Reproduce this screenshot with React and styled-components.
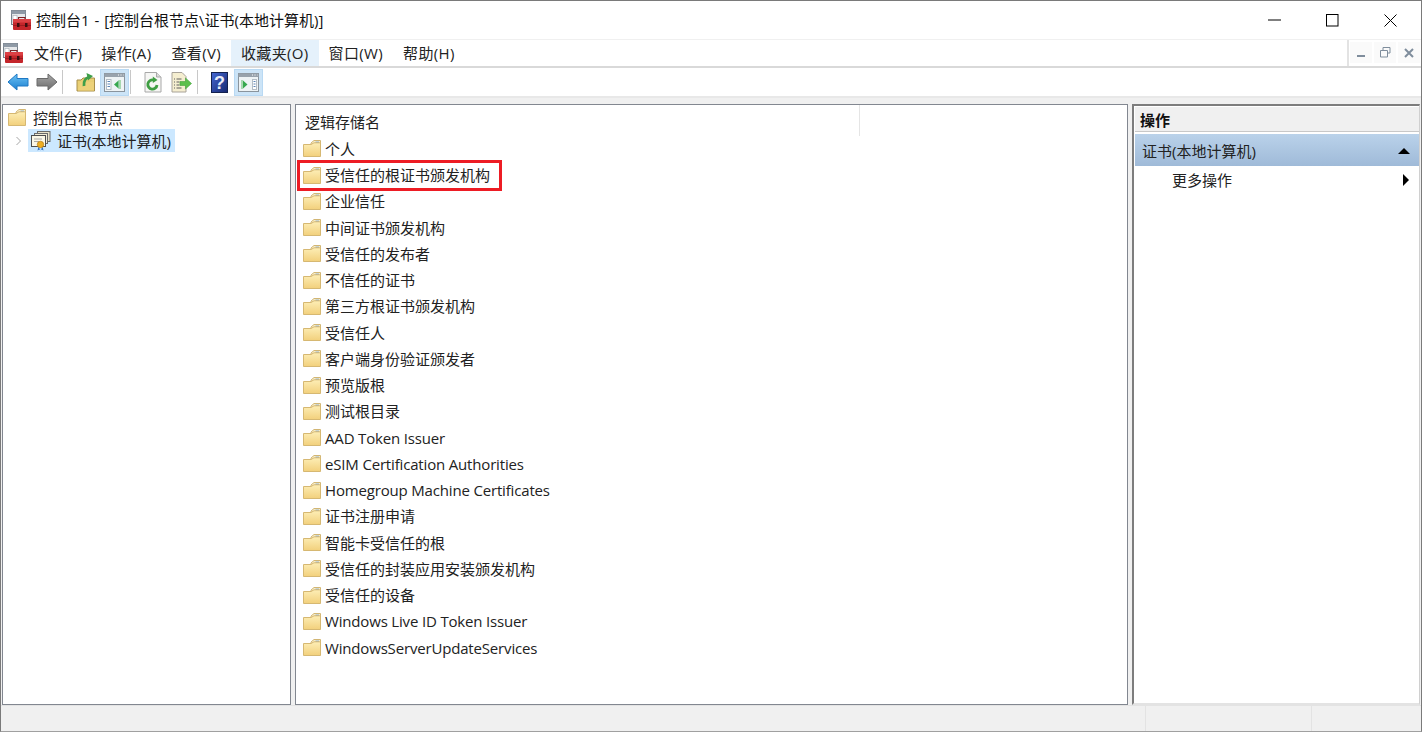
import React from 'react';
import styled, { createGlobalStyle } from 'styled-components';

const Global = createGlobalStyle`
  html, body { margin: 0; padding: 0; background: #fff; overflow: hidden; }
  * { box-sizing: border-box; }
`;
const FONT = `"Open Sans", "Noto Sans CJK SC", sans-serif`;

const Win = styled.div`
  width: 1422px; height: 732px; display: flex; flex-direction: column;
  border: 1px solid #7a7a7a; border-bottom-color: #a0a0a0; background: #f0f0f0;
  font: 15px/20px ${FONT}; color: #222; overflow: hidden;
`;
const TitleBar = styled.div`
  height: 38px; flex: none; background: #fff; display: flex; align-items: center; padding-left: 10px;
`;
const TitleText = styled.div`
  margin-left: 5px; font-size: 15px; color: #111; flex: 1; white-space: nowrap; word-spacing: 1px;
`;
const Caption = styled.div`display: flex; align-items: center; margin-right: 2px;`;
const CapBtn = styled.div`
  width: 58px; height: 38px; display: flex; align-items: center; justify-content: center;
`;
const MenuBar = styled.div`
  height: 29px; flex: none; display: flex; background: #fff; border-top: 1px solid #f0f0f0; border-bottom: 2px solid #d9d9d9;
`;
const MenuIcon = styled.div`width: 23px; flex: none; padding: 3px 0 0 2px;`;
const MenuItem = styled.div`
  padding: 0 ${p => p.$tight ? '9px' : '10px'} 0 10px; height: 26px; line-height: 26px; white-space: nowrap; color: #222; letter-spacing: 0.35px;
  background: ${p => p.$hot ? '#e5f1fb' : 'transparent'};
`;
const MenuSpacer = styled.div`flex: 1; border-right: 2px solid #e3e3e3;`;
const MdiBtns = styled.div`display: flex; gap: 2px; padding: 2px 0 0 1px; width: 72px;`;
const MdiBtn = styled.div`
  width: 22px; height: 21px; background: #fafafa; display: flex; align-items: center; justify-content: center;
`;
const ToolBar = styled.div`
  height: 30px; flex: none; display: flex; align-items: center; background: #fff; padding-left: 2px; border-bottom: 2px solid #e8e8e8;
`;
const Tool = styled.div`
  width: 29px; height: 27px; flex: none; display: flex; align-items: center; justify-content: center;
  background: ${p => p.$on ? '#cce4f7' : 'transparent'}; border: 1px solid ${p => p.$on ? '#b9d9f3' : 'transparent'};
`;
const Sep = styled.div`width: 1px; height: 24px; background: #c8c8c8; margin: 0 ${p => p.$r || 7}px 0 1px; flex: none;`;
const Gap = styled.div`height: 6px; flex: none; background: #f0f0f0;`;
const Panes = styled.div`height: 601px; flex: none; display: flex; background: #f0f0f0; padding-left: 1px;`;
const TreePane = styled.div`
  width: 289px; flex: none; background: #fff; border: 1px solid #828790; padding: 1px 0 0 5px;
`;
const TreeRow = styled.div`
  display: flex; align-items: center; height: 23px; white-space: nowrap;
`;
const Chevron = styled.div`width: 20px; flex: none; display: flex; justify-content: center;`;
const TreeSel = styled.div`
  display: flex; align-items: center; height: 23px; background: #cce8ff; padding: 0 4px 0 3px; gap: 6px;
`;
const TreeLabel = styled.span`margin-left: 7px;`;
const ListPane = styled.div`
  width: 833px; margin-left: 4px; flex: none; background: #fff; border: 1px solid #828790; position: relative;
`;
const ListHead = styled.div`
  height: 31px; padding: 6px 0 0 9px; line-height: 22px; width: 564px; border-right: 1px solid #e5e5e5;
`;
const List = styled.div`padding-left: 7px; margin-top: -0.2px;`;
const Row = styled.div`
  height: 26.25px; display: flex; align-items: center; gap: 4px; white-space: nowrap; color: #222;
  letter-spacing: ${p => p.$latin ? '-0.17px' : '0'};
`;
const RedBox = styled.div`
  position: absolute; left: 1px; top: 55px; width: 205px; height: 31px; border: 3px solid #ed1c24;
`;
const ActionPane = styled.div`
  width: 288px; margin-left: 4px; flex: none; background: #fff;
  border-left: 2px solid #7d7d7d; border-top: 2px solid #7d7d7d; border-right: 1px solid #d0d0d0; border-bottom: 2px solid #e3e3e3;
  display: flex; flex-direction: column;
`;
const ActionHead = styled.div`
  height: 26px; background: #f0f0f0; border-top: 1px solid #fff; font-weight: 700; padding: 1px 0 0 5px; line-height: 25px; color: #111;
  border-bottom: 1px solid #c8c8c8; margin-left: 1px;
`;
const ActionSection = styled.div`
  height: 32px; margin: 2px 0 0 1px; background: linear-gradient(#bad2ea, #9fbad8); display: flex; align-items: center;
  justify-content: space-between; padding: 1px 9px 0 7px; color: #222;
`;
const ActionItem = styled.div`
  height: 30px; display: flex; align-items: center; justify-content: space-between; padding: 0 10px 2px 38px;
`;
const Tri = styled.div`
  width: 0; height: 0; flex: none;
  ${p => p.$up
    ? 'border-left: 6px solid transparent; border-right: 6px solid transparent; border-bottom: 6px solid #000;'
    : 'border-top: 6px solid transparent; border-bottom: 6px solid transparent; border-left: 6px solid #000;'}
`;
const StatusBar = styled.div`
  flex: 1; display: flex; background: #f0f0f0; border-top: 1px solid #e3e3e3; justify-content: flex-end;
`;
const StatusCell = styled.div`
  width: ${p => p.$w}px; border-left: 1px solid #e3e3e3;
`;

const Folder = () => (
  <svg width="18" height="17" viewBox="0 0 18 17">
    <defs>
      <linearGradient id="fg" x1="0" y1="0" x2="0" y2="1">
        <stop offset="0" stopColor="#fdeeb6" />
        <stop offset="1" stopColor="#f2d07c" />
      </linearGradient>
    </defs>
    <path d="M8 3 L11 .5 L17.5 .5 L17.5 6 L8 6 Z" fill="#f9eec8" stroke="#d2b674" />
    <rect x="12.5" y="1.6" width="3.5" height="1.4" fill="#7fa9d4" />
    <path d="M.5 4.5 L8 4.5 L11 2.8 L17.5 2.8 L17.5 16.5 L.5 16.5 Z" fill="url(#fg)" stroke="#d6b872" strokeLinejoin="round" />
  </svg>
);

const ConsoleIcon = () => (
  <svg width="20" height="20" viewBox="0 0 20 20">
    <rect x=".5" y=".5" width="14" height="14" fill="#e6e8ea" stroke="#78828c" />
    <rect x=".5" y=".5" width="14" height="3.5" fill="#8f9aa6" />
    <rect x="2" y="5.5" width="4" height="7" fill="#fff" stroke="#a4adb6" strokeWidth=".6" />
    <path d="M7.5 9.5 V7.5 H14 V9.5" fill="none" stroke="#7c2326" strokeWidth="1.2" />
    <rect x="2" y="9" width="18" height="11" rx="1" fill="#c4262b" />
    <rect x="2" y="9" width="18" height="3.5" rx="1" fill="#dc4044" />
    <rect x="2" y="15" width="18" height="1" fill="#9d1b20" />
    <rect x="6" y="13" width="2.5" height="4" fill="#3a0f10" />
    <rect x="14" y="13" width="2.5" height="4" fill="#3a0f10" />
  </svg>
);

const Cert = () => (
  <svg width="20" height="20" viewBox="0 0 20 20">
    <rect x="6.5" y=".5" width="12.5" height="10" fill="#e8e2c8" stroke="#6a6a6a" />
    <rect x="3.5" y="2.5" width="13" height="10" fill="#f2ecd6" stroke="#6a6a6a" />
    <rect x=".5" y="4.5" width="14" height="11" fill="#fbf7e6" stroke="#4f4f4f" />
    <path d="M3 8h8M3 10.5h5" stroke="#a8a8a8" />
    <path d="M7.5 15.5l-1 4 2-1 1 1M11.5 15.5l1 4-2-1-1 1" fill="#2f6fc0" />
    <circle cx="9.5" cy="13.5" r="3.2" fill="#eeae22" stroke="#b07a14" strokeWidth=".7" />
  </svg>
);

const Arrow = ({ color, stroke, dark, flip }) => (
  <svg width="22" height="20" viewBox="0 0 22 20" style={flip ? { transform: 'scaleX(-1)' } : undefined}>
    <defs>
      <linearGradient id={`a${color.slice(1)}`} x1="0" y1="0" x2="0" y2="1">
        <stop offset="0" stopColor={color} />
        <stop offset="1" stopColor={dark} />
      </linearGradient>
    </defs>
    <path d="M1 10 L10 2 L10 6.5 L21 6.5 L21 14 L10 14 L10 18 Z" fill={`url(#a${color.slice(1)})`} stroke={stroke} strokeLinejoin="round" />
  </svg>
);

const PaneToggle = ({ right }) => (
  <svg width="21" height="21" viewBox="0 0 21 21">
    <rect x=".5" y="1.5" width="20" height="18" fill="#eef3f5" stroke="#8a949d" />
    <rect x=".5" y="1.5" width="20" height="3.5" fill="#98a2ac" />
    <path d="M14 3h1M16.5 3h1M19 3h.5" stroke="#fff" />
    {right ? (
      <>
        <rect x="14.5" y="7.5" width="4" height="10" fill="#fff" stroke="#b4bdc5" />
        <path d="M15.5 9.5h2M15.5 12h2M15.5 14.5h2" stroke="#5d86b6" />
        <rect x="3" y="8" width="2" height="9" fill="#a6d8b0" />
        <path d="M5 8.5 L9.5 12.5 L5 16.5 Z" fill="#36a84e" />
      </>
    ) : (
      <>
        <rect x="2.5" y="7.5" width="4.5" height="10" fill="#fff" stroke="#b4bdc5" />
        <path d="M3.5 9.5h2.5M3.5 12h2.5M3.5 14.5h2.5" stroke="#5d86b6" />
        <rect x="14.5" y="8" width="2.5" height="9" fill="#a6d8b0" />
        <path d="M14.5 8.5 L10 12.5 L14.5 16.5 Z" fill="#36a84e" />
      </>
    )}
  </svg>
);

const UpFolder = () => (
  <svg width="20" height="20" viewBox="0 0 20 20">
    <path d="M1 8 L5 8 L7 6 L18.5 6 L18.5 19 L1 19 Z" fill="#e9cf74" stroke="#a88f4a" />
    <path d="M2 18.5 L4 10 L18 10 L18 18.5 Z" fill="#edd27a" />
    <path d="M8 14 C7.5 9 9.5 6 13 5" fill="none" stroke="#3f9f49" strokeWidth="2.8" />
    <path d="M10.5 1 L17 4 L12 8.5 Z" fill="#3f9f49" />
  </svg>
);

const Refresh = () => (
  <svg width="18" height="21" viewBox="0 0 18 21">
    <path d="M1 .5 H12.5 L17 5 V20 H1 Z" fill="#f6f6f4" stroke="#a8a8a8" />
    <path d="M12.5 .5 V5 H17" fill="#dcdcdc" stroke="#a8a8a8" />
    <path d="M13 13 A4.6 4.6 0 1 1 9.5 8" fill="none" stroke="#3f9e43" strokeWidth="2.8" />
    <path d="M8.8 4.5 L13.5 8 L8.8 11 Z" fill="#3f9e43" />
  </svg>
);

const Export = () => (
  <svg width="21" height="21" viewBox="0 0 21 21">
    <path d="M1 .5 H11 L15 4.5 V20 H1 Z" fill="#f5eed0" stroke="#a8a39a" />
    <path d="M3 7h1M5.5 7h5M3 10h1M5.5 10h3M3 13h1M5.5 13h3M3 16h1M5.5 16h5" stroke="#5e5e5e" />
    <path d="M9 9.5 H14.5 V6 L20.5 11.5 L14.5 17 V13.5 H9 Z" fill="#5cc04c" stroke="#45a33d" strokeWidth=".6" />
  </svg>
);

const Help = () => (
  <svg width="17" height="21" viewBox="0 0 17 21">
    <defs>
      <linearGradient id="hg" x1="0" y1="0" x2="1" y2="1">
        <stop offset="0" stopColor="#4468d4" /><stop offset="1" stopColor="#16276e" />
      </linearGradient>
    </defs>
    <rect x=".5" y=".5" width="16" height="20" fill="url(#hg)" stroke="#13214f" />
    <text x="8.5" y="17" textAnchor="middle" fontFamily="Liberation Sans" fontWeight="700" fontSize="18" fill="#e8ecf8">?</text>
  </svg>
);

const folders = ['个人','受信任的根证书颁发机构','企业信任','中间证书颁发机构','受信任的发布者','不信任的证书','第三方根证书颁发机构','受信任人','客户端身份验证颁发者','预览版根','测试根目录','AAD Token Issuer','eSIM Certification Authorities','Homegroup Machine Certificates','证书注册申请','智能卡受信任的根','受信任的封装应用安装颁发机构','受信任的设备','Windows Live ID Token Issuer','WindowsServerUpdateServices'];

export default function App() {
  return (
    <Win>
      <Global />
      <TitleBar>
        <ConsoleIcon />
        <TitleText>控制台1 - [控制台根节点\证书(本地计算机)]</TitleText>
        <Caption>
          <CapBtn><svg width="13" height="13"><path d="M0 6H13" stroke="#000" /></svg></CapBtn>
          <CapBtn><svg width="13" height="13"><rect x=".5" y=".5" width="11.5" height="11.5" fill="none" stroke="#000" /></svg></CapBtn>
          <CapBtn><svg width="13" height="13"><path d="M.5.5L12.5 12.5M12.5.5L.5 12.5" stroke="#000" /></svg></CapBtn>
        </Caption>
      </TitleBar>
      <MenuBar>
        <MenuIcon><ConsoleIcon /></MenuIcon>
        <MenuItem $tight>文件(F)</MenuItem>
        <MenuItem>操作(A)</MenuItem>
        <MenuItem>查看(V)</MenuItem>
        <MenuItem $hot>收藏夹(O)</MenuItem>
        <MenuItem>窗口(W)</MenuItem>
        <MenuItem>帮助(H)</MenuItem>
        <MenuSpacer />
        <MdiBtns>
          <MdiBtn><svg width="10" height="10"><path d="M1 8H9" stroke="#7f8d9c" strokeWidth="2" /></svg></MdiBtn>
          <MdiBtn><svg width="11" height="11"><path d="M3 3V.5H10V6H7.5M.5 3.5H7.5V10H.5Z" fill="none" stroke="#7f8d9c" /></svg></MdiBtn>
          <MdiBtn><svg width="10" height="10"><path d="M1 1L9 9M9 1L1 9" stroke="#7f8d9c" strokeWidth="2" /></svg></MdiBtn>
        </MdiBtns>
      </MenuBar>
      <ToolBar>
        <Tool><Arrow color="#6cc3f5" dark="#1b7fd0" stroke="#1e78c4" /></Tool>
        <Tool><Arrow color="#a8a8a8" dark="#6c6c6c" stroke="#6a6a6a" flip /></Tool>
        <Sep $r={8} />
        <Tool><UpFolder /></Tool>
        <Tool $on><PaneToggle /></Tool>
        <Sep />
        <Tool><Refresh /></Tool>
        <Tool><Export /></Tool>
        <Sep />
        <Tool><Help /></Tool>
        <Tool $on><PaneToggle right /></Tool>
      </ToolBar>
      <Gap />
      <Panes>
        <TreePane>
          <TreeRow><Folder /><TreeLabel>控制台根节点</TreeLabel></TreeRow>
          <TreeRow>
            <Chevron><svg width="7" height="10"><path d="M1.5 1L5.5 5L1.5 9" fill="none" stroke="#a6a6a6" /></svg></Chevron>
            <TreeSel><Cert />证书(本地计算机)</TreeSel>
          </TreeRow>
        </TreePane>
        <ListPane>
          <ListHead>逻辑存储名</ListHead>
          <List>
            {folders.map(f => <Row key={f} $latin={/^[\x00-\x7f]+$/.test(f)}><Folder />{f}</Row>)}
          </List>
          <RedBox />
        </ListPane>
        <ActionPane>
          <ActionHead>操作</ActionHead>
          <ActionSection>证书(本地计算机)<Tri $up /></ActionSection>
          <ActionItem>更多操作<Tri /></ActionItem>
        </ActionPane>
      </Panes>
      <StatusBar>
        <StatusCell $w={166} />
        <StatusCell $w={110} />
      </StatusBar>
    </Win>
  );
}
